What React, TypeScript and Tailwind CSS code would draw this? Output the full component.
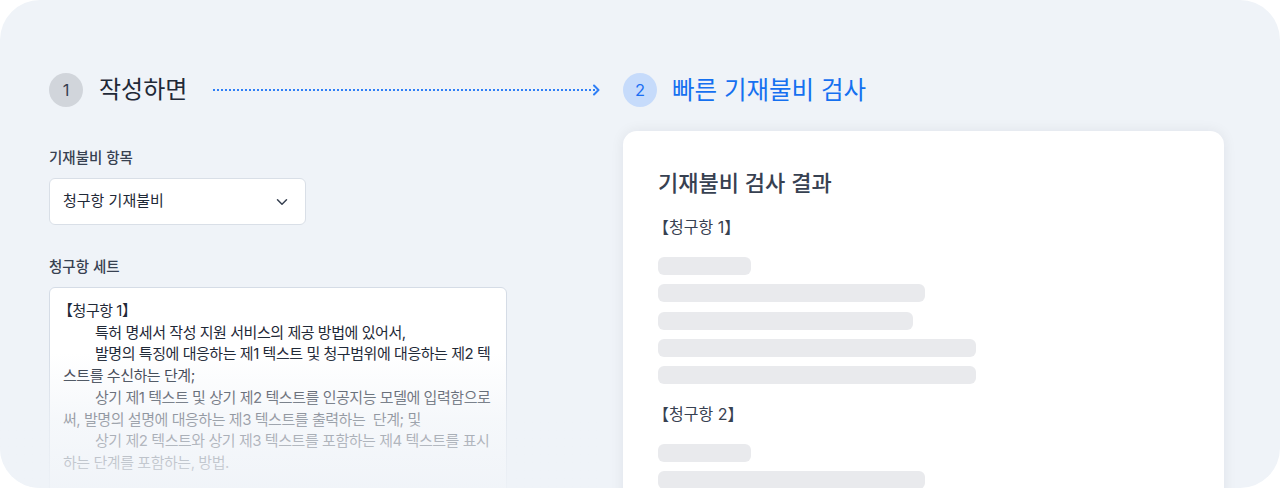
import { ChevronDown } from 'lucide-react';

const font = "font-['Inter','Noto_Sans_CJK_KR',sans-serif]";

// 청구항 본문 (줄바꿈은 원본 그대로)
const claimLines: { text: string; indent?: boolean }[] = [
    { text: '【청구항 1】' },
    { text: '특허 명세서 작성 지원 서비스의 제공 방법에 있어서,', indent: true },
    { text: '발명의 특징에 대응하는 제1 텍스트 및 청구범위에 대응하는 제2 텍', indent: true },
    { text: '스트를 수신하는 단계;' },
    { text: '상기 제1 텍스트 및 상기 제2 텍스트를 인공지능 모델에 입력함으로', indent: true },
    { text: '써, 발명의 설명에 대응하는 제3 텍스트를 출력하는  단계; 및' },
    { text: '상기 제2 텍스트와 상기 제3 텍스트를 포함하는 제4 텍스트를 표시', indent: true },
    { text: '하는 단계를 포함하는, 방법.' },
];

function SkeletonGroup() {
    return (
        <div className="flex flex-col gap-[9.3px]">
            <div className="h-[18px] w-[93px] rounded-md bg-[#e9eaed]" />
            <div className="h-[18px] w-[267px] rounded-md bg-[#e9eaed]" />
            <div className="h-[18px] w-[255px] rounded-md bg-[#e9eaed]" />
            <div className="h-[18px] w-[318px] rounded-md bg-[#e9eaed]" />
            <div className="h-[18px] w-[318px] rounded-md bg-[#e9eaed]" />
        </div>
    );
}

export default function App() {
    return (
        <div className={`w-[1280px] h-[490px] bg-white overflow-hidden ${font}`}>
            <div className="relative h-[488px] rounded-[40px] bg-[#eff3f8] pt-[73px] pl-[49px] pr-[56px] overflow-hidden">
                {/* 단계 헤더 */}
                <div className="flex items-center h-[34px]">
                    <div className="flex items-center w-[574px] pr-[23px]">
                        <div className="flex items-center justify-center w-[34px] h-[34px] rounded-full bg-[#d1d5db] text-[16.5px] text-[#374151]">1</div>
                        <span className="ml-[16px] text-[24px] font-normal text-[#1f2937] leading-none">작성하면</span>
                        <div className="ml-[26px] flex-1 flex items-center">
                            <div className="flex-1 h-[2px] bg-[repeating-linear-gradient(90deg,#2f7ff6_0_2px,transparent_2px_4px)]" />
                            <svg width="8" height="12" viewBox="0 0 8 12" className="-ml-[3px]">
                                <polyline points="2,1.5 6.5,6 2,10.5" fill="none" stroke="#2f7ff6" strokeWidth="2" strokeLinecap="round" strokeLinejoin="round" />
                            </svg>
                        </div>
                    </div>
                    <div className="flex items-center">
                        <div className="flex items-center justify-center w-[34px] h-[34px] rounded-full bg-[#c6dbfb] text-[16.5px] text-[#1b6ef3]">2</div>
                        <span className="ml-[15px] text-[24.5px] font-normal text-[#1570f0] leading-none">빠른 기재불비 검사</span>
                    </div>
                </div>

                {/* 본문 */}
                <div className="flex mt-[24px]">
                    <div className="w-[574px] pt-[17px]">
                        <p className="text-[14.5px] leading-[20px] font-medium text-[#374151]">기재불비 항목</p>
                        <div className="mt-[10px] w-[257px] h-[47px] rounded-md border border-[#d9dfe7] bg-white flex items-center justify-between pl-[13px] pr-[14px]">
                            <span className="text-[15px] text-[#1f2937]">청구항 기재불비</span>
                            <ChevronDown className="w-[18px] h-[18px] text-[#374151]" strokeWidth={2} />
                        </div>
                        <p className="mt-[32px] text-[14.5px] leading-[20px] font-medium text-[#374151]">청구항 세트</p>
                        <div className="mt-[10px] w-[458px] h-[230px] rounded-md border border-[#d5dce6] bg-white pt-[12px] px-[13px] text-[15px] leading-[21.7px] tracking-[-0.45px] text-[#1f2937]">
                            {claimLines.map((line, i) => (
                                <div key={i} className={`whitespace-pre ${line.indent ? 'pl-[32px]' : i === 0 ? '-ml-[5px]' : ''}`}>
                                    {line.text}
                                </div>
                            ))}
                        </div>
                    </div>

                    <div className="flex-1 h-[400px] rounded-[14px] bg-white shadow-[0_0_14px_rgba(15,23,42,0.07)] pt-[37px] pl-[35px]">
                        <h2 className="text-[22px] leading-[30px] font-medium text-[#374151]">기재불비 검사 결과</h2>
                        <p className="mt-[17px] -ml-[5px] text-[16px] leading-[24px] text-[#374151]">【청구항 1】</p>
                        <div className="mt-[18px]">
                            <SkeletonGroup />
                        </div>
                        <p className="mt-[18px] -ml-[5px] text-[16px] leading-[24px] text-[#374151]">【청구항 2】</p>
                        <div className="mt-[18px]">
                            <SkeletonGroup />
                        </div>
                    </div>
                </div>

                {/* 하단 페이드 */}
                <div className="absolute left-0 bottom-0 w-[600px] h-[135px] bg-gradient-to-b from-[#eff3f8]/0 via-[#eff3f8]/60 to-[#eff3f8]/90" />
            </div>
        </div>
    );
}
